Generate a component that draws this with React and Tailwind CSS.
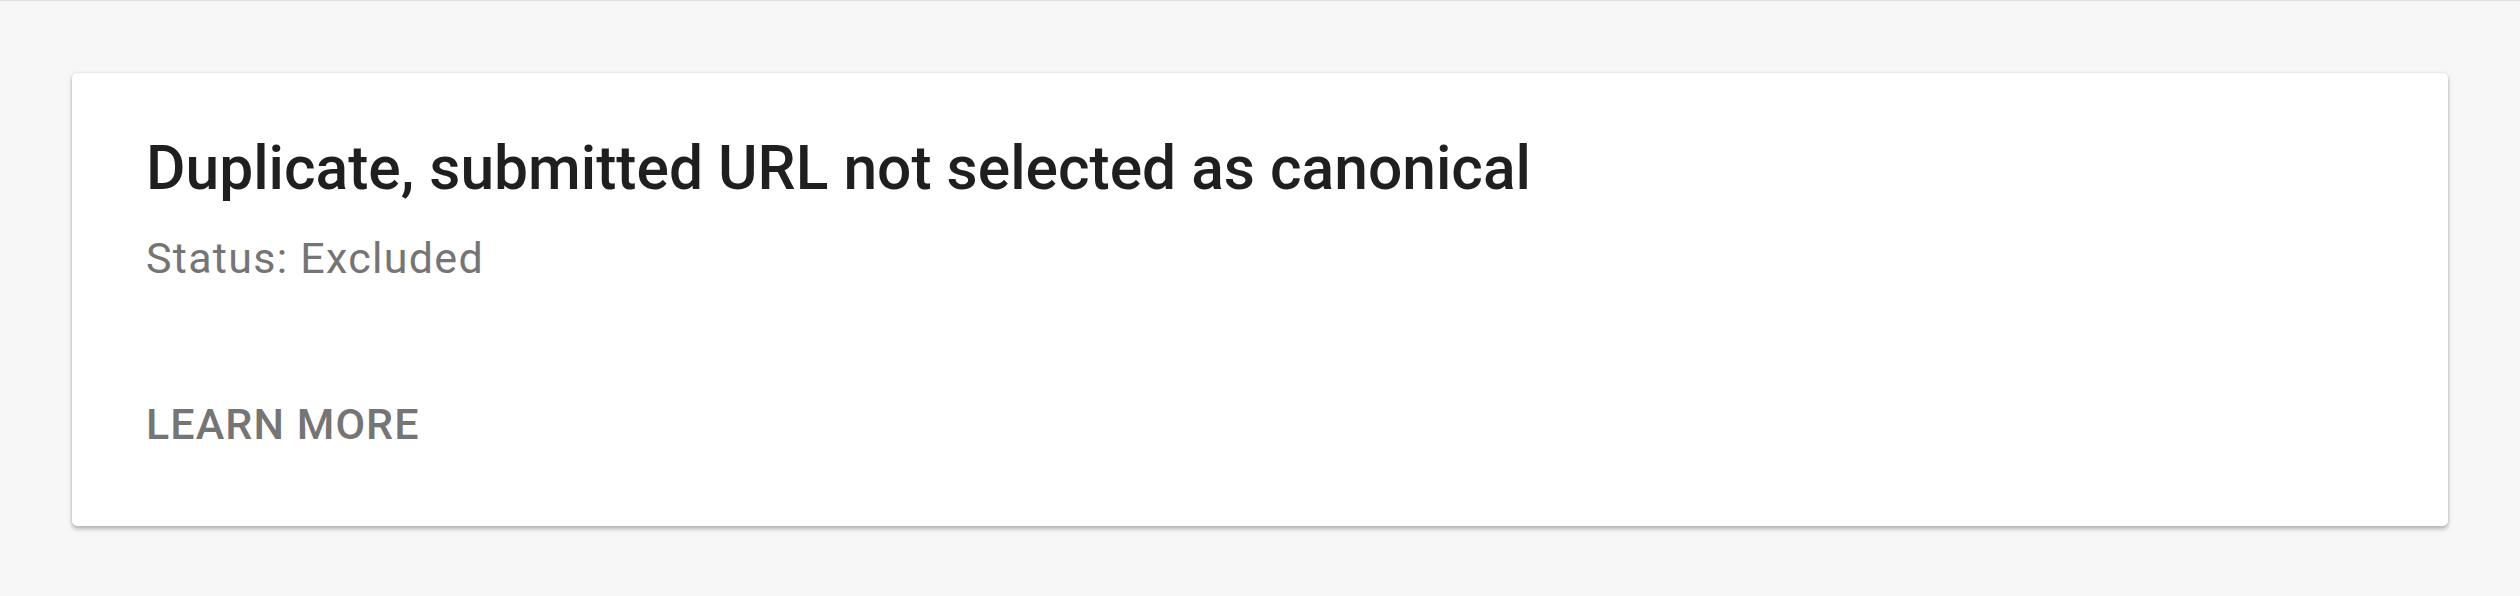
export default function App() {
  return (
    <div className="w-full h-[596px] bg-[#f7f7f7] border-t border-[#e0e0e0] pt-[72px] px-[72px]" style={{ fontFamily: "Roboto, 'Noto Sans', sans-serif" }}>
      <div className="bg-white rounded-[5px] h-[453px] pt-[60px] pl-[74px] shadow-[0_3px_4px_rgba(0,0,0,0.26),0_0_3px_rgba(0,0,0,0.12)]">
        <h1 className="text-[60.5px] leading-[1.2] font-medium text-[#1f1f1f]">Duplicate, submitted URL not selected as canonical</h1>
        <p className="mt-[27px] text-[43px] leading-[1.2] tracking-[0.03em] text-[#757575]">Status: Excluded</p>
        <div className="mt-[115px] text-[43px] leading-[1.2] font-medium tracking-[0.025em] text-[#757575]">LEARN MORE</div>
      </div>
    </div>
  );
}
